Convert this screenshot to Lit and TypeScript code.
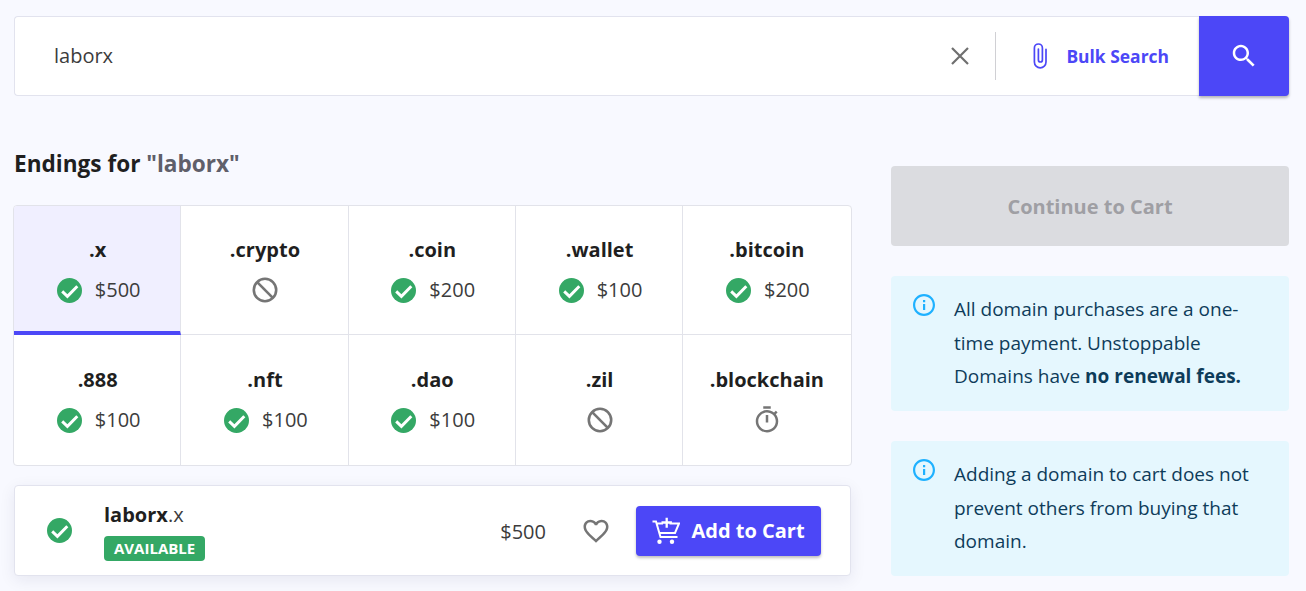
import { LitElement, html, css } from "lit";
import { customElement } from "lit/decorators.js";

const check = (size: number) => html`<svg class="ic" width=${size} height=${size} viewBox="0 0 24 24"><circle cx="12" cy="12" r="12" fill="#34a865"/><path d="M5 12.800l5 4.800 9.500-9.600" fill="none" stroke="#fff" stroke-width="2.800"/></svg>`;
const ban = html`<svg class="ic" width="26" height="26" viewBox="0 0 26 26" fill="none" stroke="#757575" stroke-width="2.6"><circle cx="13" cy="13" r="11.2"/><path d="M5.2 5.2l15.6 15.6"/></svg>`;
const timer = html`<svg class="ic timer" width="30" height="30" viewBox="0 0 24 24" fill="#757575"><path d="M9 1h6v2H9zM11 8h2v6h-2zM19.03 7.39l1.42-1.42c-.43-.51-.9-.99-1.41-1.41l-1.42 1.42C16.07 4.74 14.12 4 12 4c-4.97 0-9 4.03-9 9s4.02 9 9 9 9-4.03 9-9c0-2.12-.74-4.07-1.97-5.61zM12 20c-3.87 0-7-3.13-7-7s3.13-7 7-7 7 3.13 7 7-3.13 7-7 7z"/></svg>`;

type Cell = { name: string; price?: string; kind?: "ban" | "timer"; active?: boolean };
const cells: Cell[] = [
  { name: ".x", price: "$500", active: true },
  { name: ".crypto", kind: "ban" },
  { name: ".coin", price: "$200" },
  { name: ".wallet", price: "$100" },
  { name: ".bitcoin", price: "$200" },
  { name: ".888", price: "$100" },
  { name: ".nft", price: "$100" },
  { name: ".dao", price: "$100" },
  { name: ".zil", kind: "ban" },
  { name: ".blockchain", kind: "timer" },
];

const info = html`<svg class="info" width="24" height="24" viewBox="0 0 24 24" fill="#1eb1ff"><path d="M11 7h2.200v2.200h-2.200zM11 11h2.200v6H11z"/><path d="M12 1C5.900 1 1 5.900 1 12s4.900 11 11 11 11-4.900 11-11S18.100 1 12 1zm0 19.800c-4.900 0-8.800-3.900-8.800-8.800S7.100 3.200 12 3.200s8.800 3.900 8.800 8.800-3.900 8.800-8.800 8.800z"/></svg>`;

@customElement("app-root")
export class AppRoot extends LitElement {
  static styles = css`
    :host {
      display: block;
      height: 591px;
      overflow: hidden;
      background: #f8f9ff;
      font-family: "Open Sans", sans-serif;
      color: #1f1f1f;
      padding: 16px 17px 0 14px;
      box-sizing: border-box;
    }
    .search {
      display: flex;
      align-items: stretch;
      height: 80px;
      background: #fff;
      border: 1px solid #e2e3ee;
      border-right: 0;
      border-radius: 4px;
      box-sizing: border-box;
    }
    .query {
      flex: 1;
      padding-left: 39px;
      font-size: 20px;
      line-height: 78px;
      color: #3c3c3c;
    }
    .clear {
      align-self: center;
      display: flex;
      margin-right: 23px;
    }
    .divider {
      width: 1px;
      background: #d0d0d4;
      margin: 15px 0;
    }
    .bulk {
      display: flex;
      align-items: center;
      padding: 0 30px 0 37px;
      gap: 18px;
      color: #4c47f7;
      font-weight: 700;
      font-size: 17.45px;
    }
    .go {
      width: 90px;
      margin: -1px 0;
      background: #4c47f7;
      border-radius: 0 4px 4px 0;
      display: flex;
      align-items: center;
      justify-content: center;
      box-shadow: 0 2px 3px rgba(0, 0, 0, 0.28);
    }
    .main {
      display: grid;
      grid-template-columns: 838px 398px;
      column-gap: 39px;
      margin-top: 49px;
    }
    h2 {
      margin: 0 0 24px;
      padding-top: 2px;
      font-size: 22.6px;
      line-height: 34px;
      font-weight: 700;
      color: #1f1f1f;
      height: 34px;
    }
    h2 span {
      color: #5f5f6a;
    }
    .grid {
      display: grid;
      grid-template-columns: repeat(5, 1fr);
      grid-template-rows: 129px 131px;
      background: #fff;
      border: 1px solid #e2e3ea;
      border-radius: 4px;
      overflow: hidden;
      box-sizing: border-box;
      width: 838.5px;
      height: 261px;
      margin-left: -1px;
    }
    .cell {
      display: flex;
      flex-direction: column;
      align-items: center;
      box-sizing: border-box;
      padding-top: 30px;
      padding-left: 1px;
      border-right: 1px solid #e2e3ea;
      border-bottom: 1px solid #e2e3ea;
    }
    .cell:nth-child(5n) {
      border-right: 0;
      padding-left: 0;
    }
    .cell:nth-child(n + 6) {
      border-bottom: 0;
      padding-top: 31px;
    }
    .cell.active {
      background: #f0efff;
      border-bottom: 4px solid #4c47f7;
    }
    .name {
      font-size: 20px;
      font-weight: 700;
      line-height: 28px;
    }
    .status {
      display: flex;
      align-items: center;
      justify-content: center;
      gap: 13px;
      height: 26px;
      margin-top: 13px;
      font-size: 20px;
      color: #3c3c3c;
    }
    .status span {
      margin-bottom: 2px;
    }
    .status .ic:first-child:not(:last-child) {
      margin-left: 2px;
    }
    .ic {
      display: block;
      flex: none;
    }
    .timer {
      margin: -2px 0;
    }
    .row {
      display: flex;
      align-items: center;
      width: 837px;
      height: 91px;
      margin-top: 19px;
      background: #fff;
      border: 1px solid #e2e3ee;
      border-radius: 4px;
      box-sizing: border-box;
      padding: 0 29px 0 32px;
      box-shadow: 0 4px 16px rgba(30, 30, 80, 0.08);
    }
    .domain {
      display: flex;
      flex-direction: column;
      align-items: flex-start;
      margin-left: 32px;
    }
    .dn {
      font-size: 20px;
      line-height: 30px;
      font-weight: 700;
    }
    .dn span {
      font-weight: 400;
      color: #3c3c3c;
    }
    .badge {
      margin-top: 6px;
      background: #34a865;
      color: #fff;
      font-size: 15px;
      font-weight: 700;
      line-height: 25px;
      height: 25px;
      padding: 0 10px;
      border-radius: 4px;
    }
    .price {
      margin-left: auto;
      margin-top: 2px;
      font-size: 20px;
      color: #3c3c3c;
    }
    .heart {
      margin: 0 25px 0 35px;
      display: block;
    }
    .add {
      width: 185px;
      height: 50px;
      display: flex;
      align-items: center;
      justify-content: center;
      gap: 11px;
      background: #4c47f7;
      color: #fff;
      font-size: 20px;
      font-weight: 700;
      border-radius: 4px;
      box-shadow: 0 2px 3px rgba(0, 0, 0, 0.25);
    }
    .right {
      padding-top: 21px;
    }
    .cta {
      height: 80px;
      background: #dbdce0;
      border-radius: 4px;
      color: #9f9fa4;
      font-size: 20px;
      font-weight: 700;
      display: flex;
      align-items: center;
      justify-content: center;
    }
    .note {
      display: flex;
      gap: 18px;
      background: #e5f7fe;
      border-radius: 4px;
      padding: 17.300px 29px 17px 21px;
      margin-top: 30px;
      height: 135px;
      box-sizing: border-box;
      color: #0e3c5a;
      font-size: 19px;
      line-height: 33.250px;
    }
    .note b {
      font-weight: 700;
    }
    .info {
      flex: none;
    }
  `;

  render() {
    return html`
      <div class="search">
        <div class="query">laborx</div>
        <div class="clear">
          <svg width="24" height="24" viewBox="0 0 24 24" fill="none" stroke="#6f6f6f" stroke-width="2.2"><path d="M4 4l16 16M20 4L4 20"/></svg>
        </div>
        <div class="divider"></div>
        <div class="bulk">
          <svg width="15" height="30" viewBox="9 5 15 30" fill="none" stroke="#4c47f7" stroke-width="1.7" stroke-linecap="round"><path d="M22 13.300V26a5.800 5.800 0 0 1-11.600 0V12a4 4 0 0 1 8 0v12a2 2 0 0 1-4 0V13"/></svg>
          Bulk Search
        </div>
        <div class="go">
          <svg width="30" height="30" viewBox="0 0 24 24" fill="#fff"><path d="M15.500 14h-.79l-.28-.27C15.410 12.590 16 11.110 16 9.500 16 5.910 13.090 3 9.500 3S3 5.910 3 9.500 5.910 16 9.500 16c1.610 0 3.090-.59 4.230-1.570l.27.28v.79l5 4.990L20.490 19l-4.990-5zm-6 0C7.010 14 5 11.990 5 9.500S7.010 5 9.500 5 14 7.010 14 9.500 11.990 14 9.500 14z"/></svg>
        </div>
      </div>
      <div class="main">
        <div class="left">
          <h2>Endings for <span>"laborx"</span></h2>
          <div class="grid">
            ${cells.map(
              (c) => html`<div class="cell ${c.active ? "active" : ""}">
                <div class="name">${c.name}</div>
                <div class="status">
                  ${c.kind === "ban"
                    ? ban
                    : c.kind === "timer"
                      ? timer
                      : html`${check(25)}<span>${c.price}</span>`}
                </div>
              </div>`,
            )}
          </div>
          <div class="row">
            ${check(25)}
            <div class="domain">
              <div class="dn">laborx<span>.x</span></div>
              <div class="badge">AVAILABLE</div>
            </div>
            <div class="price">$500</div>
            <svg class="heart" width="30" height="30" viewBox="0 0 24 24" fill="#757575"><path d="M16.500 3c-1.740 0-3.410.81-4.500 2.090C10.910 3.810 9.240 3 7.500 3 4.420 3 2 5.420 2 8.500c0 3.780 3.400 6.860 8.550 11.540L12 21.350l1.450-1.320C18.600 15.360 22 12.280 22 8.500 22 5.420 19.580 3 16.500 3zm-4.400 15.550l-.1.100-.1-.1C7.140 14.240 4 11.390 4 8.500 4 6.500 5.500 5 7.500 5c1.540 0 3.040.99 3.570 2.360h1.870C13.460 5.990 14.960 5 16.500 5c2 0 3.500 1.500 3.500 3.500 0 2.890-3.140 5.740-7.900 10.050z"/></svg>
            <div class="add">
              <svg width="28" height="28" viewBox="8 6 28 28" fill="none" stroke="#fff" stroke-width="2"><path d="M8.500 10.500H12l4.500 15.500h17M12.800 12.500h6.200M25.500 12.500H35L31 22H15.500"/><path d="M22.700 6.700v10M17.500 11.500h10.400" stroke-width="2.300"/><circle cx="15.500" cy="30.700" r="2.200" fill="#fff" stroke="none"/><circle cx="28" cy="30.700" r="2.200" fill="#fff" stroke="none"/></svg>
              Add to Cart
            </div>
          </div>
        </div>
        <div class="right">
          <div class="cta">Continue to Cart</div>
          <div class="note">
            ${info}
            <div>All domain purchases are a one-time payment. Unstoppable Domains have <b>no renewal fees.</b></div>
          </div>
          <div class="note">
            ${info}
            <div>Adding a domain to cart does not prevent others from buying that domain.</div>
          </div>
        </div>
      </div>
    `;
  }
}
